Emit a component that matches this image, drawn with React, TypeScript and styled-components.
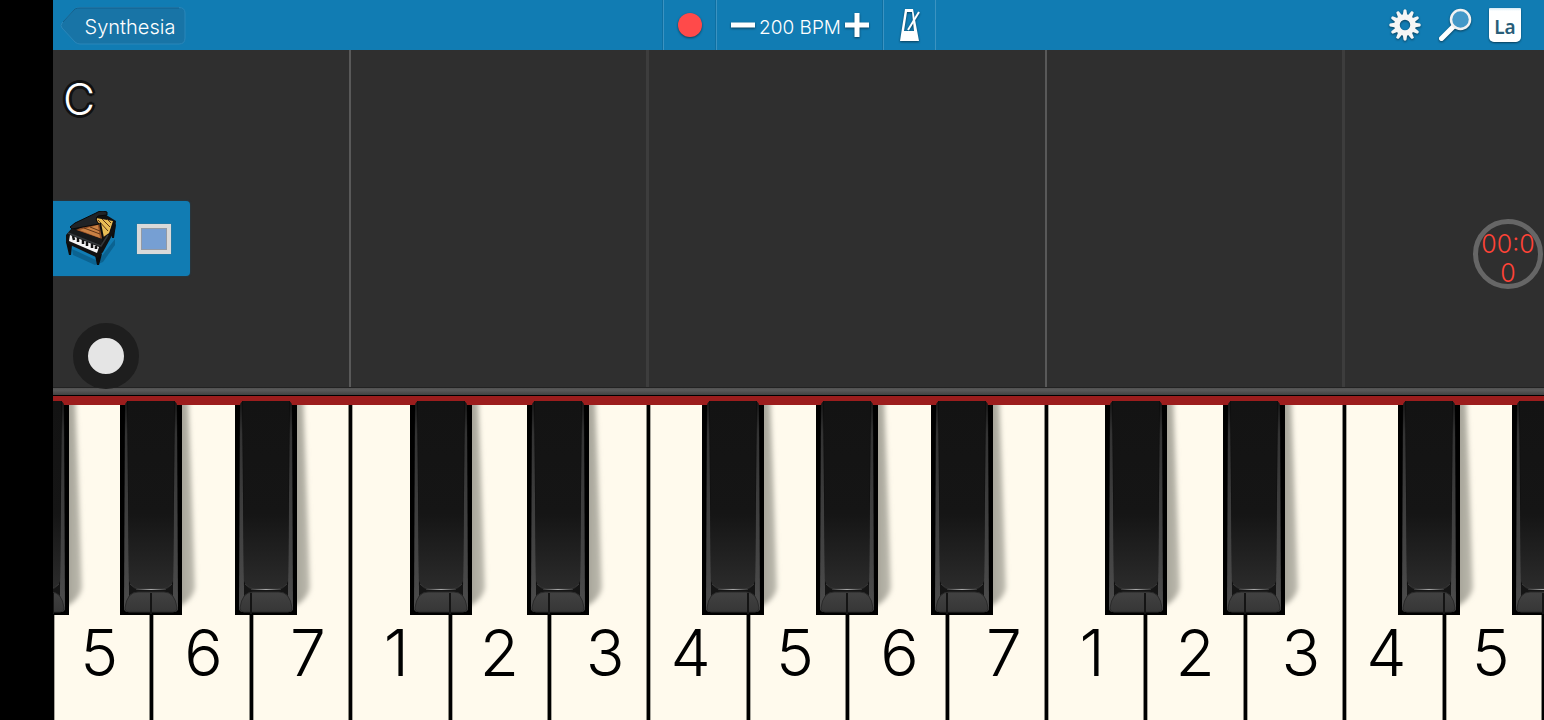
import React from "react";
import styled, { createGlobalStyle } from "styled-components";

const GlobalStyle = createGlobalStyle`
  * { box-sizing: border-box; }
  body { margin: 0; background: #000; font-family: Inter, Roboto, sans-serif; }
  button { font: inherit; border: 0; padding: 0; background: none; color: inherit; }
`;

const Screen = styled.div`
  display: flex;
  flex-direction: column;
  min-height: 100vh;
  margin-left: 53px;
  overflow: hidden;
  background: #2f2f2f;
`;

const Toolbar = styled.header`
  display: grid;
  grid-template-columns: 1fr auto 1fr;
  height: 50px;
  background: #117cb3;
  color: #fff;
`;

const BackButton = styled.button`
  position: relative;
  width: 126px;
  height: 38px;
  margin: 7px 0 0 7px;
  padding: 2px 0 0 14px;
  font-size: 20px;
  font-weight: 300;
  line-height: 36px;
`;

const BackShape = styled.svg`
  position: absolute;
  inset: 0;
`;

const BackLabel = styled.span`
  position: relative;
`;

const Transport = styled.div`
  display: flex;
  padding-left: 2px;
`;

const Cell = styled.div<{ $width: number }>`
  display: flex;
  align-items: center;
  justify-content: center;
  width: ${(p) => p.$width}px;
  border-left: 1px solid #3c93c1;
  box-shadow: -1px 0 #0e6fa1;
  &:last-child { border-right: 1px solid #3c93c1; }
`;

const IconButton = styled.button`
  display: flex;
  filter: drop-shadow(0 1px 1px rgba(0, 0, 0, 0.5));
`;

const Tempo = styled.span`
  width: 90px;
  padding-top: 4px;
  text-align: center;
  white-space: nowrap;
  font-size: 19px;
  font-weight: 300;
`;

const Tools = styled.div`
  display: flex;
  justify-content: flex-end;
  align-items: center;
  gap: 17px;
  padding-right: 23px;
`;

const Roll = styled.main`
  position: relative;
  z-index: 1;
  flex: 1;
  display: grid;
  grid-template-columns: repeat(15, 1fr);
`;

const Lane = styled.div<{ $line?: "octave" | "group" }>`
  border-right: ${(p) =>
    p.$line === "octave" ? "2px solid #595959" : p.$line === "group" ? "3px solid #3d3d3d" : "0"};
`;

const Overlay = styled.div`
  position: absolute;
  inset: 0;
`;

const Chord = styled.h1`
  margin: 22px 0 0 10px;
  height: 54px;
  font-size: 44px;
  font-weight: 300;
  line-height: 54px;
  color: #fff;
  text-shadow: 3px 0 #111, -3px 0 #111, 0 3px #111, 0 -3px #111, 2px 2px #111, -2px 2px #111,
    2px -2px #111, -2px -2px #111;
`;

const Instrument = styled.div`
  display: flex;
  align-items: center;
  gap: 20px;
  width: 137px;
  height: 75px;
  margin-top: 75px;
  padding-left: 12px;
  border-radius: 0 4px 4px 0;
  background: #117cb3;
  box-shadow: 0 0 2px #1b4a62;
`;

const Swatch = styled.button`
  width: 34px;
  height: 30px;
  border: 4px solid #d9d9d9;
  background: #769fd3;
  box-shadow: inset 0 0 0 1px #929aa6, 0 0 1px #777;
`;

const AssistButton = styled.button`
  display: block;
  width: 66px;
  height: 66px;
  margin: 47px 0 0 20px;
  border-radius: 50%;
  border: 15px solid #1e1e1e;
  background: #e5e5e5;
`;

const Timer = styled.button`
  position: absolute;
  top: 169px;
  right: 1px;
  width: 70px;
  height: 70px;
  padding-top: 6px;
  border: 5px solid #666;
  border-radius: 50%;
  color: #ff4337;
  font-size: 25px;
  font-weight: 300;
  line-height: 29px;
  word-break: break-all;
`;

const Rail = styled.div`
  height: 9px;
  border-top: 1px solid #222;
  border-bottom: 1px solid #000;
  background: linear-gradient(#515151, #5a5a5a 30%, #414141);
`;

const Keyboard = styled.section`
  display: grid;
  grid-template-columns: repeat(15, 1fr);
  height: 324px;
  border-top: 9px solid #9c1d1d;
`;

const WhiteKey = styled.div`
  position: relative;
  border-right: 2px solid #000;
  border-left: 1px solid #000;
  background: #fffaed;
  box-shadow: inset 1px 0 #a9a69d, inset -1px 0 #8b8981;
`;

const KeyLabel = styled.span<{ $shift: number }>`
  display: block;
  margin-left: ${(p) => p.$shift}px;
  padding-top: 208px;
  text-align: center;
  font-size: 64px;
  font-weight: 350;
  line-height: 80px;
  color: #000;
`;

const BlackKeyBox = styled.div<{ $offset: number; $before?: boolean }>`
  position: absolute;
  z-index: 1;
  top: -5px;
  left: calc(${(p) => (p.$before ? "-2px" : "100%")} + ${(p) => p.$offset - 30}px);
  width: 84px;
  height: 216px;
  svg { display: block; }
`;

const BlackKey = ({ offset, before }: { offset: number; before?: boolean }) => {
  const slit = 31 - offset;
  return (
    <BlackKeyBox $offset={offset} $before={before}>
      <svg width="84" height="216" viewBox="0 0 84 216">
        <g clipPath="url(#belowFelt)">
          <path d="M50 -10H68Q72 90 75 188Q73 199 60 206H50Z" fill="url(#shade)" filter="url(#soft)" />
          <path d="M0 5H62V215H0Z" fill="#000" />
        </g>
        <path d="M5 5Q6 1 9 1H53Q56 1 57 5L58 208Q58 212 54 212H8Q4 212 4 208Z" fill="url(#side)" />
        <path d="M7 1H55L53 188Q51 201 41 201H21Q11 201 9 188Z" fill="#0e0e0e" />
        <path d="M8 1H54L53 181Q51 189 42 189H20Q11 189 9 181Z" fill="url(#top)" />
        <path d="M9 184L19 190H43L53 184V200H9Z" fill="#151515" />
        <path d="M5 208Q7 192 18 192H44Q55 192 57 208Q57 212 53 212H9Q5 212 5 208Z" fill="url(#front)" stroke="#2a2a2a" />
        <path d="M10 184Q14 189 20 189H42Q48 189 52 184" fill="none" stroke="#3a3a3a" />
        <path d="M16 189H46V190H16Z" fill="url(#glint)" />
        <path d={`M${slit} 193V214`} stroke="#141414" strokeWidth="2" />
      </svg>
    </BlackKeyBox>
  );
};

type Note = { shift: number; black?: number };
const notes: Record<number, Note> = {
  1: { shift: -8, black: -9 },
  2: { shift: -1, black: 9 },
  3: { shift: 12 },
  4: { shift: -16, black: -15 },
  5: { shift: -6, black: 0 },
  6: { shift: 4, black: 15 },
  7: { shift: 14 },
};
const keys = [5, 6, 7, 1, 2, 3, 4, 5, 6, 7, 1, 2, 3, 4, 5];

const Gear = () => (
  <svg width="32" height="32" viewBox="-16 -16 32 32">
    {Array.from({ length: 12 }, (_, i) => (
      <path
        key={i}
        d="M-2.400 -9L-1.400 -15Q0 -16.500 1.400 -15L2.400 -9Z"
        fill="#f6f6f6"
        transform={`rotate(${i * 30})`}
      />
    ))}
    <circle r="8" fill="none" stroke="#f6f6f6" strokeWidth="5.500" />
  </svg>
);

const Magnifier = () => (
  <svg width="34" height="34" viewBox="0 0 34 34">
    <path d="M3.500 30.500L16 18" stroke="#fff" strokeWidth="5" strokeLinecap="round" />
    <circle cx="22.500" cy="11.500" r="9.500" fill="#4398c8" stroke="#f2f2f2" strokeWidth="2.500" />
  </svg>
);

const LabelsButton = styled.button`
  width: 32px;
  height: 34px;
  padding-top: 3px;
  border-radius: 1px 1px 5px 5px;
  background: linear-gradient(#d3eaf5, #fff 3px);
  box-shadow: 0 1px 2px rgba(0, 0, 0, 0.5);
  color: #285d78;
  font-family: "Noto Sans", sans-serif;
  font-size: 19px;
  font-weight: 600;
  line-height: 24px;
`;

const GrandPiano = () => (
  <svg width="52" height="56" viewBox="0 0 52 56" aria-label="Grand piano">
    <path d="M7 38L33 50L50 28L50 34L38 51L30 54L8 44Z" fill="#064a70" opacity=".5" />
    <path d="M1 31L7 34L6 44H4ZM30 44L37 43L34 54H32ZM46 17L51 13L49 27H47Z" fill="#0c0c0c" />
    <path d="M1 24L7 17L38 2L51 10L50 19L38 41L33 47L1 32Z" fill="#111" />
    <path d="M11 19L34 8L47 11L44 22L36 28Z" fill="#8e4c24" />
    <path d="M31 7L48 10L44 22L38 26L35 15Z" fill="#e8bd55" />
    <path d="M14 19L33 14L35 27Z" fill="#c98144" />
    <path d="M19 17L35 23M25 16L35 20M33 9L43 20M37 8L45 16M42 8L46 12" stroke="#5e3416" />
    <path d="M5 16L10 12L31 2Q33 0 38 0L42 1V4L33 5Q29 8 34 13L7 18Z" fill="#202326" stroke="#080808" />
    <path d="M35 12L38 27" stroke="#0c0c0c" strokeWidth="2" />
    <path d="M7 18L37 28L37 34L4 22Z" fill="#17191a" />
    <path d="M5 24L34 36L32 42L4 30Z" fill="#f5f5f5" />
    <path d="M8 25L9 29M13 27L13 31M18 29L18 33M22 31L22 35M27 33L27 37M31 35L31 38" stroke="#111" strokeWidth="2.500" />
    <path d="M3 22L36 35L43 24" fill="none" stroke="#33383b" strokeWidth="1.500" />
  </svg>
);

const PaintDefs = styled.svg`
  position: absolute;
  width: 0;
  height: 0;
`;

export default function App() {
  return (
    <>
      <GlobalStyle />
      <PaintDefs aria-hidden="true">
        <defs>
          <linearGradient id="top" x2="0" y2="1">
            <stop offset="0" stopColor="#131313" />
            <stop offset=".6" stopColor="#151515" />
            <stop offset="1" stopColor="#2b2b2b" />
          </linearGradient>
          <linearGradient id="side" x2="0" y2="1">
            <stop offset="0" stopColor="#151515" />
            <stop offset=".15" stopColor="#333" />
            <stop offset="1" stopColor="#4c4c4c" />
          </linearGradient>
          <linearGradient id="front" x2="0" y2="1">
            <stop offset="0" stopColor="#424242" />
            <stop offset="1" stopColor="#363636" />
          </linearGradient>
          <linearGradient id="glint" gradientUnits="userSpaceOnUse" x1="16" x2="46">
            <stop offset="0" stopColor="#333" />
            <stop offset=".5" stopColor="#aaa" />
            <stop offset="1" stopColor="#333" />
          </linearGradient>
          <linearGradient id="shade" gradientUnits="userSpaceOnUse" x1="60" x2="78">
            <stop offset="0" stopColor="#a5a398" />
            <stop offset="1" stopColor="#c4c1b5" />
          </linearGradient>
          <filter id="soft" x="-50%" width="200%">
            <feGaussianBlur stdDeviation="2.500" />
          </filter>
          <clipPath id="belowFelt">
            <path d="M0 5H84V216H0Z" />
          </clipPath>
        </defs>
      </PaintDefs>
      <Screen>
        <Toolbar>
          <BackButton>
            <BackShape width="126" height="38" viewBox="0 0 126 38">
              <path
                d="M15 2Q17 .5 20 .5H119Q125 .5 125 6V31Q125 37 119 37H20Q17 37 15 35L2 21Q0 18.500 2 16Z"
                fill="#1874a6"
                stroke="#2a86b9"
              />
              <path d="M3 15L15 2Q17 1 20 1H119" fill="none" stroke="#125f8b" />
            </BackShape>
            <BackLabel>Synthesia</BackLabel>
          </BackButton>
          <Transport>
            <Cell $width={53}>
              <IconButton aria-label="Record">
                <svg width="26" height="26" viewBox="0 0 26 26">
                  <circle cx="13" cy="13" r="12" fill="#ff4a4a" />
                </svg>
              </IconButton>
            </Cell>
            <Cell $width={167}>
              <IconButton aria-label="Slower">
                <svg width="24" height="24" viewBox="0 0 24 24">
                  <path d="M0 12H24" stroke="#fff" strokeWidth="5" />
                </svg>
              </IconButton>
              <Tempo>200 BPM</Tempo>
              <IconButton aria-label="Faster">
                <svg width="24" height="24" viewBox="0 0 24 24">
                  <path d="M0 12H24M12 0V24" stroke="#fff" strokeWidth="5" />
                </svg>
              </IconButton>
            </Cell>
            <Cell $width={53}>
              <IconButton aria-label="Metronome">
                <svg width="22" height="34" viewBox="0 0 22 34">
                  <path fillRule="evenodd" d="M6 1H14L20 33H1ZM8 4L5 23H15L13 4Z" fill="#fff" />
                  <path d="M9 22L20 4" stroke="#fff" strokeWidth="2" />
                </svg>
              </IconButton>
            </Cell>
          </Transport>
          <Tools>
            <IconButton aria-label="Settings">
              <Gear />
            </IconButton>
            <IconButton aria-label="Search">
              <Magnifier />
            </IconButton>
            <LabelsButton>La</LabelsButton>
          </Tools>
        </Toolbar>
        <Roll>
          {keys.map((n, i) => (
            <Lane key={i} $line={n === 7 ? "octave" : n === 3 ? "group" : undefined} />
          ))}
          <Overlay>
            <Chord>C</Chord>
            <Instrument>
              <GrandPiano />
              <Swatch aria-label="Track color" />
            </Instrument>
            <AssistButton aria-label="Assist" />
            <Timer>00:00</Timer>
          </Overlay>
        </Roll>
        <Rail />
        <Keyboard>
          {keys.map((n, i) => (
            <WhiteKey key={i}>
              {i === 0 && <BlackKey offset={-15} before />}
              <KeyLabel $shift={notes[n].shift}>{n}</KeyLabel>
              {notes[n].black !== undefined && <BlackKey offset={notes[n].black} />}
            </WhiteKey>
          ))}
        </Keyboard>
      </Screen>
    </>
  );
}
